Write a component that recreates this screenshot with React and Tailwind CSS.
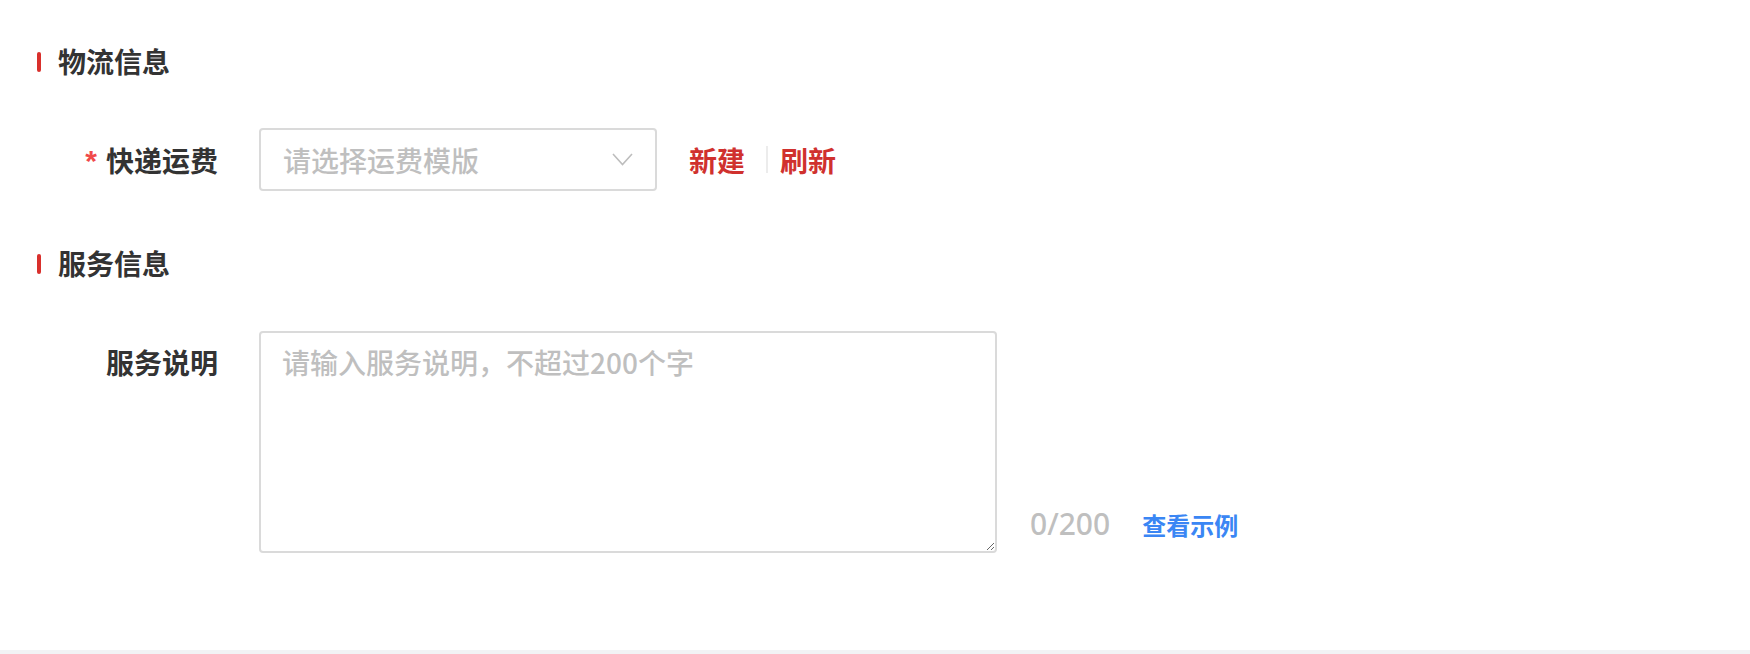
import React from "react";

const CJK = "font-['Noto_Sans_CJK_SC','Noto_Sans',sans-serif]";

function SectionTitle({ children, className = "" }) {
  return (
    <div className={`flex h-[40px] items-center pl-[37px] ${className}`}>
      <div className="mt-[1px] h-[20px] w-[4px] rounded-full bg-[#d9302c]" />
      <div className="ml-[17px] text-[28px] font-semibold leading-[40px] text-[#333333]">
        {children}
      </div>
    </div>
  );
}

export default function App() {
  return (
    <div className={`flex h-[654px] w-[1750px] flex-col bg-white ${CJK}`}>
      <div className="flex-1 pt-[41px]">
        <SectionTitle>物流信息</SectionTitle>

        <div className="mt-[47px] flex h-[63px] items-center">
          <div className="flex w-[218px] items-center justify-end">
            <span className="mr-[9px] mt-[2px] font-['Liberation_Sans',sans-serif] text-[30px] font-bold leading-[40px] text-[#f04a4a]">
              *
            </span>
            <span className="text-[28px] font-semibold leading-[40px] text-[#333333]">快递运费</span>
          </div>
          <div className="ml-[41px] flex h-[63px] w-[398px] items-center justify-between rounded-[4px] border-2 border-[#dadada] bg-white pl-[22px] pr-[22px]">
            <span className="text-[28px] font-medium leading-[40px] text-[#bfbfbf]">请选择运费模版</span>
            <svg width="21" height="13" viewBox="0 0 21 13" fill="none">
              <path d="M1 1 L10.5 11.5 L20 1" stroke="#bdbdbd" strokeWidth="1.6" strokeLinejoin="miter" />
            </svg>
          </div>
          <span className="ml-[32px] text-[28px] font-semibold leading-[40px] text-[#d0312e]">新建</span>
          <span className="ml-[21px] h-[27px] w-[2px] bg-[#ececec]" />
          <span className="ml-[12px] text-[28px] font-semibold leading-[40px] text-[#d0312e]">刷新</span>
        </div>

        <SectionTitle className="mt-[52px]">服务信息</SectionTitle>

        <div className="mt-[48px] flex items-start">
          <div className="mt-[11px] flex w-[218px] justify-end">
            <span className="text-[28px] font-semibold leading-[40px] text-[#333333]">服务说明</span>
          </div>
          <textarea
            className={`ml-[41px] h-[222px] w-[738px] rounded-[4px] border-2 border-[#dadada] bg-white pl-[21px] pr-[21px] pt-[9px] text-[28px] font-medium leading-[40px] text-[#333333] outline-none placeholder:text-[#bfbfbf] ${CJK}`}
            placeholder="请输入服务说明，不超过200个字"
          />
          <div className="mb-[14px] ml-[33px] flex items-baseline self-end">
            <span className="font-['Noto_Sans',sans-serif] text-[30px] font-medium leading-none text-[#bfbfbf]">
              0/200
            </span>
            <span className="ml-[32px] text-[24px] font-semibold leading-none text-[#3a86f4]">查看示例</span>
          </div>
        </div>
      </div>
      <div className="h-[4px] w-full bg-[#f2f3f5]" />
    </div>
  );
}
